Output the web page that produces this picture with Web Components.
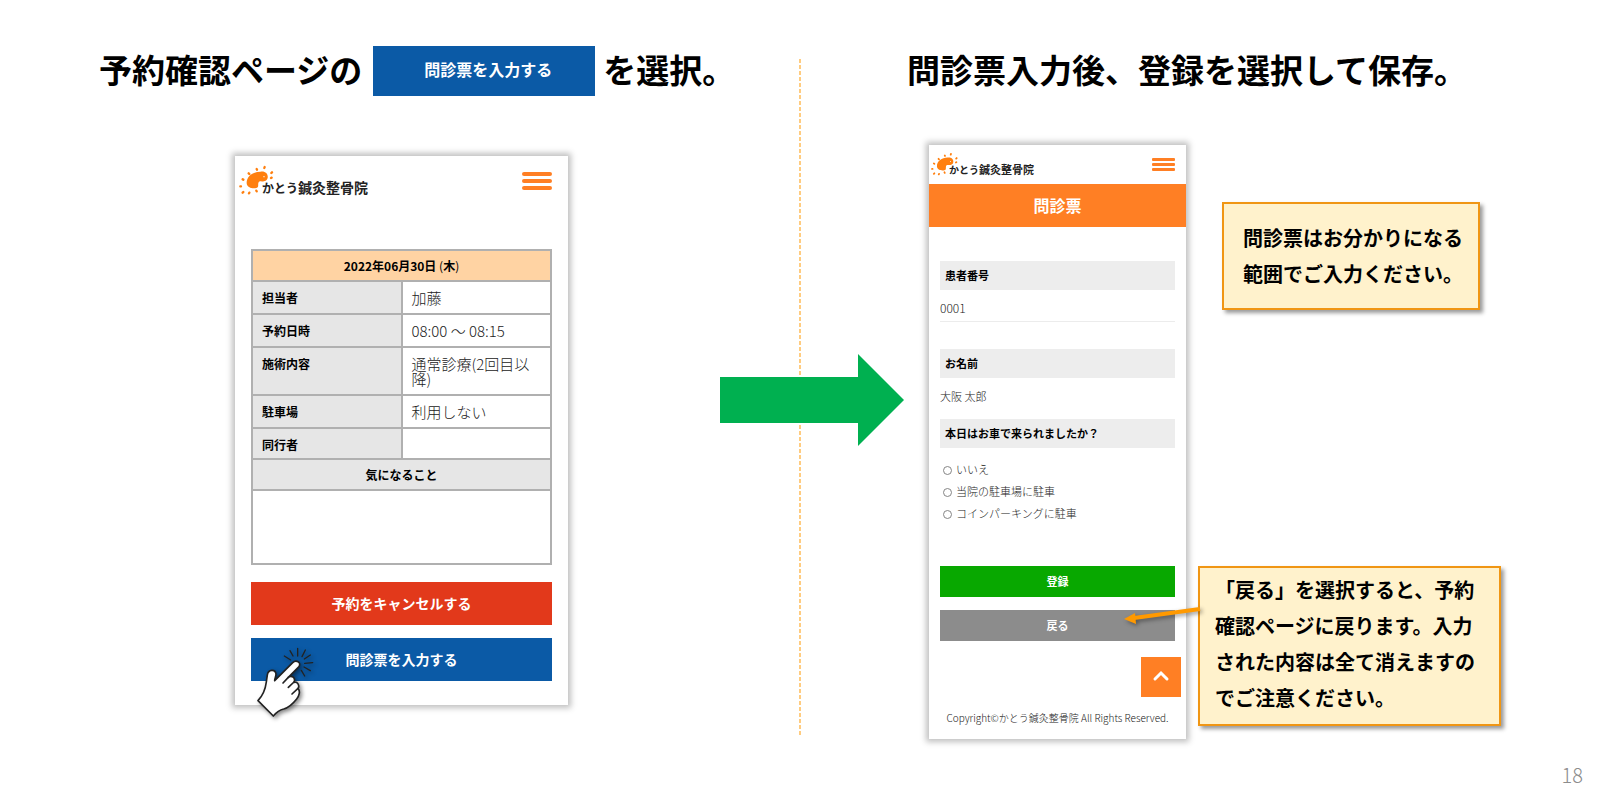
<!DOCTYPE html>
<html lang="ja">
<head>
<meta charset="utf-8">
<meta name="viewport" content="width=device-width, initial-scale=1">
<title>問診票の入力手順</title>
<style>
  body { margin: 0; background: #fff; color: #000; font-family: "Noto Sans CJK JP", "Noto Sans", sans-serif; }
</style>
</head>
<body>
<guide-slide page="18">
  <guide-step slot="before" class="first">
    <span slot="title">予約確認ページの</span>
    <action-button slot="title" variant="sample">問診票を入力する</action-button>
    <span slot="title">を選択。</span>
    <reservation-screen></reservation-screen>
  </guide-step>
  <guide-step slot="after" class="second">
    <span slot="title">問診票入力後、登録を選択して保存。</span>
    <questionnaire-screen></questionnaire-screen>
    <note-list>
      <note-box class="hint">問診票はお分かりになる<br>範囲でご入力ください。</note-box>
      <note-box pointer>「戻る」を選択すると、予約<br>確認ページに戻ります。入力<br>された内容は全て消えますの<br>でご注意ください。</note-box>
    </note-list>
  </guide-step>
</guide-slide>

<script>
const define = (name, html, setup) => {
  const template = document.createElement('template');
  template.innerHTML = html;
  customElements.define(name, class extends HTMLElement {
    constructor() {
      super();
      this.attachShadow({ mode: 'open' }).append(template.content.cloneNode(true));
    }
    connectedCallback() { if (setup) setup(this, this.shadowRoot); }
  });
};

define('guide-slide', `
  <style>
    :host { display: grid; position: relative; min-height: 100vh; box-sizing: border-box;
      grid-template-columns: minmax(0, 1fr) 2px minmax(0, 1fr); grid-template-rows: 1fr auto; }
    .divider { margin: 59px 0 14px; background: repeating-linear-gradient(#ffcc80 0 4px, transparent 4px 6px); }
    .arrow { position: absolute; left: 45%; top: 50%; width: 184px; height: 92px; transform: translateY(-50%); }
    footer { grid-column: 1 / -1; padding-right: 17px; text-align: right; color: #8c8c8c;
      font-size: 20px; font-weight: 300; line-height: 50px; }
  </style>
  <slot name="before"></slot>
  <div class="divider"></div>
  <slot name="after"></slot>
  <svg class="arrow" viewBox="0 0 184 92" aria-hidden="true"><path fill="#00b050" d="M0 23H138V0L184 46L138 92V69H0Z"/></svg>
  <footer></footer>`,
  (host, root) => { root.querySelector('footer').textContent = host.getAttribute('page'); });

define('guide-step', `
  <style>
    :host { display: flex; flex-direction: column; padding-top: 46px; }
    h1 { display: flex; align-items: center; gap: 8px; height: 50px; margin: 0;
      font-size: 33px; font-weight: 700; white-space: nowrap; }
    h1 ::slotted(span) { padding-bottom: 4px; }
    h1 ::slotted(action-button) { margin-left: 3px; }
    .content { display: flex; }
    :host(.first) h1 { padding-left: 99px; }
    :host(.first) .content { justify-content: center; padding: 60px 0 0 4px; }
    :host(.second) h1 { padding-left: 106px; }
    :host(.second) .content { padding: 49px 0 0 128px; }
  </style>
  <h1><slot name="title"></slot></h1>
  <div class="content"><slot></slot></div>`);

define('action-button', `
  <style>
    :host { display: block; }
    button { display: block; width: 100%; height: 43px; padding: 0 0 2px; border: 0; color: #fff; background: #0b5aa6;
      font: 700 14px "Noto Sans CJK JP", sans-serif; }
    :host([variant="sample"]) { width: 222px; }
    :host([variant="sample"]) button { height: 50px; padding: 0 0 4px 8px; font-size: 16px; }
    :host([variant="danger"]) button { background: #e2391b; }
    :host([variant="save"]) button { height: 31px; font-size: 11px; background: #08a800; }
    :host([variant="back"]) button { height: 31px; font-size: 11px; background: #8c8c8c; }
  </style>
  <button type="button"><slot></slot></button>`);

define('clinic-logo', `
  <style>
    :host { display: flex; align-items: flex-start; color: #222; font-weight: 700; font-size: 14px; line-height: 14px; white-space: nowrap; }
    svg { width: 36px; height: 30px; }
    .name { margin: 15px 0 0 -13px; position: relative; }
    .kana { font-size: 12px; }
    :host([small]) { font-size: 11px; line-height: 12px; }
    :host([small]) svg { width: 28px; height: 24px; }
    :host([small]) .name { margin: 11px 0 0 -10px; }
    :host([small]) .kana { font-size: 10px; }
  </style>
  <svg viewBox="0 0 108 90" aria-hidden="true">
    <path fill="#ff7f0e" d="M23 55C22 34 42 20 64 20C79 17 88 27 86 38C84 49 74 50 63 49C54 52 60 62 56 67C49 73 24 71 23 55Z"/>
    <path fill="none" stroke="#ff7f0e" stroke-width="7" stroke-linecap="round" d="M77 6L76 9M53 12L54 14M99 22L97 24M29 25L31 27M11 43L13 44M4 64L6 64M11 83L13 81M30 85L31 83M53 79L52 77M98 38L96 39"/>
    <circle cx="75" cy="35" r="2" fill="#fff"/>
  </svg>
  <span class="name"><span class="kana">かとう</span>鍼灸整骨院</span>`);

define('menu-button', `
  <style>
    :host { display: block; }
    button { display: flex; flex-direction: column; justify-content: space-between; width: 30px; height: 18px; padding: 0; border: 0; background: none; }
    i { display: block; width: 100%; height: 4px; border-radius: 2px; background: #ff7f24; }
    :host([small]) button { width: 23px; height: 13px; }
    :host([small]) i { height: 3px; border-radius: 1px; }
  </style>
  <button type="button" aria-label="メニュー"><i></i><i></i><i></i></button>`);

define('phone-frame', `
  <style>
    :host { display: block; flex: none; position: relative; background: #fff; box-shadow: 0 0 6px 3px rgba(0, 0, 0, .25); }
  </style>
  <slot></slot>`);

define('tap-hand', `
  <style>
    :host { display: block; filter: drop-shadow(2px 2px 2px rgba(0, 0, 0, .45)); }
    svg { display: block; width: 60px; height: 74px; }
  </style>
  <svg viewBox="90 732 180 222" aria-hidden="true" stroke="#222" stroke-linejoin="round" stroke-linecap="round">
    <path fill="#fff" stroke-width="5" d="M99 902C113 887 121 870 124 846L127 825C129 808 151 806 153 822C153 830 149 836 149 842L203 788C213 778 230 786 222 800L190 832C200 824 213 834 207 847C217 844 225 856 219 866C227 873 222 889 215 897C203 912 192 923 176 927C162 930 154 937 145 948Z"/>
    <path fill="none" stroke-width="5" d="M174 849L190 832M190 862L207 846M201 882L219 865"/>
    <path fill="none" stroke-width="4" d="M218 745V768M195 752L204 768M178 768L197 780M241 750L231 770M256 765L238 777M263 788L239 790M256 812L237 801M239 828L229 811"/>
  </svg>`);

define('reservation-screen', `
  <style>
    :host { display: block; flex: none; }
    phone-frame { width: 333px; }
    header { display: flex; justify-content: space-between; height: 93px; box-sizing: border-box; padding: 9px 16px 0 4px; }
    menu-button { margin-top: 7px; }
    main { padding: 0 16px 24px; }
    table { width: 100%; border-collapse: collapse; table-layout: fixed; }
    th, td { border: 2px solid #b0b0b0; padding: 8px 9px; text-align: left; vertical-align: top; }
    th { background: #e6e6e6; font-size: 12px; line-height: 13px; }
    th[scope="row"] { padding: 9px 9px 7px; }
    td { color: #222; font-size: 15px; font-weight: 300; line-height: 15px; }
    .date { background: #ffd3a3; text-align: center; }
    .date span { font-weight: 400; }
    .wide { text-align: center; }
    .memo { height: 56px; }
    .actions { display: grid; gap: 13px; padding-top: 17px; }
    tap-hand { position: absolute; left: 20px; bottom: -13px; }
  </style>
  <phone-frame>
    <header><clinic-logo></clinic-logo><menu-button></menu-button></header>
    <main>
      <table>
        <tr><th class="date" colspan="2">2022年06月30日 <span>(</span>木<span>)</span></th></tr>
        <tr><th scope="row">担当者</th><td>加藤</td></tr>
        <tr><th scope="row">予約日時</th><td>08:00 ～ 08:15</td></tr>
        <tr><th scope="row">施術内容</th><td>通常診療(2回目以降)</td></tr>
        <tr><th scope="row">駐車場</th><td>利用しない</td></tr>
        <tr><th scope="row">同行者</th><td></td></tr>
        <tr><th class="wide" colspan="2">気になること</th></tr>
        <tr><td class="memo" colspan="2"></td></tr>
      </table>
      <div class="actions">
        <action-button variant="danger">予約をキャンセルする</action-button>
        <action-button>問診票を入力する</action-button>
      </div>
    </main>
    <tap-hand></tap-hand>
  </phone-frame>`);

define('questionnaire-screen', `
  <style>
    :host { display: block; flex: none; }
    phone-frame { width: 257px; }
    header { display: flex; justify-content: space-between; height: 39px; box-sizing: border-box; padding: 7px 11px 0 2px; }
    menu-button { margin-top: 6px; }
    h2 { margin: 0; background: #ff7f24; color: #fff; text-align: center; font-size: 16px; line-height: 43px; }
    form { padding: 34px 11px 0; }
    .caption { display: block; box-sizing: border-box; width: 100%; padding: 0 5px; background: #ededed;
      font-size: 11px; font-weight: 700; line-height: 29px; }
    .text { display: block; box-sizing: border-box; width: 100%; height: 32px; margin: 0 0 27px; padding: 4px 0 0; border: 0;
      border-bottom: 1px solid #ececec; background: none; color: #222;
      font: 300 12px "Noto Sans CJK JP", sans-serif; outline: 0; }
    #name { height: 41px; margin: 0; padding: 0 0 6px; border: 0; font-size: 11px; }
    fieldset { margin: 0; padding: 0 0 42px; border: 0; min-width: 0; }
    .choices { padding: 10px 0 0 3px; }
    .choices label { display: flex; align-items: center; gap: 4px; height: 22px; color: #222; font-size: 11px; font-weight: 300; }
    .choices input { appearance: none; width: 9px; height: 9px; box-sizing: border-box; margin: 2px 0 0; border: 1px solid #858585; border-radius: 50%; }
    .actions { display: grid; gap: 13px; }
    .top { display: block; width: 40px; height: 40px; margin: 16px 5px 0 auto; background: #ff7f24; }
    .top svg { display: block; width: 40px; height: 40px; }
    footer { text-align: center; color: #222; font-size: 10px; font-weight: 300; line-height: 42px; white-space: nowrap; }
  </style>
  <phone-frame>
    <header><clinic-logo small></clinic-logo><menu-button small></menu-button></header>
    <h2>問診票</h2>
    <form>
      <label class="caption" for="number">患者番号</label>
      <input class="text" id="number" value="0001" readonly>
      <label class="caption" for="name">お名前</label>
      <input class="text" id="name" value="大阪 太郎" readonly>
      <fieldset>
        <legend class="caption">本日はお車で来られましたか？</legend>
        <div class="choices">
          <label><input type="radio" name="car">いいえ</label>
          <label><input type="radio" name="car">当院の駐車場に駐車</label>
          <label><input type="radio" name="car">コインパーキングに駐車</label>
        </div>
      </fieldset>
      <div class="actions">
        <action-button variant="save">登録</action-button>
        <action-button variant="back">戻る</action-button>
      </div>
    </form>
    <a class="top" href="#" aria-label="ページの先頭へ">
      <svg viewBox="0 0 40 40"><path d="M14 22L20 16L26 22" fill="none" stroke="#fff" stroke-width="3" stroke-linecap="round"/></svg>
    </a>
    <footer>Copyright©かとう鍼灸整骨院 All Rights Reserved.</footer>
  </phone-frame>`);

define('note-list', `
  <style>
    :host { display: flex; flex-direction: column; justify-content: space-between; align-items: flex-start; padding: 57px 0 13px 12px; }
    ::slotted(.hint) { margin-left: 24px; padding: 16px 15px 16px 19px; }
  </style>
  <slot></slot>`);

define('note-box', `
  <style>
    :host { display: block; position: relative; box-sizing: border-box; padding: 4px 24px 8px 15px; border: 2px solid #f09614; background: #fff2cc;
      box-shadow: 3px 3px 4px rgba(0, 0, 0, .4); font-size: 20px; font-weight: 700; line-height: 36px; white-space: nowrap; }
    svg { display: none; position: absolute; right: 100%; top: 34px; width: 76px; height: 24px; overflow: visible;
      filter: drop-shadow(2px 2px 2px rgba(0, 0, 0, .4)); }
    :host([pointer]) svg { display: block; }
  </style>
  <svg viewBox="0 0 76 24" aria-hidden="true">
    <path d="M76 7L10 16" stroke="#ff9900" stroke-width="4"/>
    <path d="M0 17L11 11L12 22Z" fill="#ff9900"/>
  </svg>
  <slot></slot>`);
</script>
</body>
</html>
